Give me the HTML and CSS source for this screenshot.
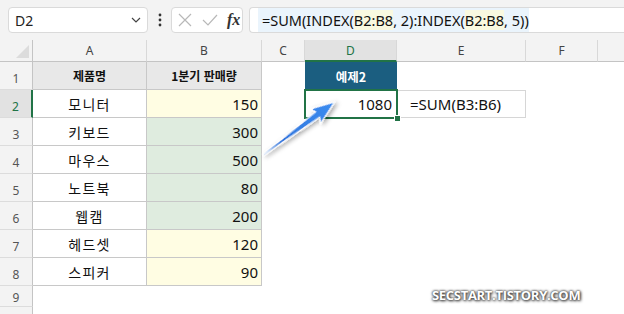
FILE: index.html
```html
<!DOCTYPE html>
<html lang="ko">
<head>
    <meta charset="utf-8">
    <title>INDEX 범위 합계</title>
    <link rel="stylesheet" href="styles.css">
</head>
<body>
<div class="app">

    <div class="bar">
        <div class="namebox">
            <span>D2</span>
            <svg class="chev" width="10" height="6" viewBox="0 0 10 6"><path d="M1 1 L5 5 L9 1" fill="none" stroke="#444" stroke-width="1.2"/></svg>
        </div>
        <div class="dots">
            <svg width="4" height="14" viewBox="0 0 4 14"><circle cx="2" cy="2" r="1.4" fill="#333"/><circle cx="2" cy="7" r="1.4" fill="#333"/><circle cx="2" cy="12" r="1.4" fill="#333"/></svg>
        </div>
        <div class="fxbox">
            <svg width="14" height="14" viewBox="0 0 14 14"><path d="M1 1 L13 13 M13 1 L1 13" stroke="#b8b8b8" stroke-width="1.2"/></svg>
            <svg width="16" height="14" viewBox="0 0 16 14"><path d="M1 7 L6 12 L15 2" fill="none" stroke="#b8b8b8" stroke-width="1.2"/></svg>
            <span class="fx">fx</span>
        </div>
        <div class="formula">
            <span class="ftext">=SUM(INDEX(<span class="hl">B2:B8</span>, 2):INDEX(<span class="hl">B2:B8</span>, 5))</span>
        </div>
    </div>

    <div class="sheet">
        <div class="row hdr">
            <div class="rh corner"><span class="tri"></span></div>
            <div class="ch col-a">A</div>
            <div class="ch col-b">B</div>
            <div class="ch col-c">C</div>
            <div class="ch col-d sel">D</div>
            <div class="ch col-e">E</div>
            <div class="ch col-f">F</div>
            <div class="ch col-g"></div>
        </div>

        <div class="row">
            <div class="rh">1</div>
            <div class="cell col-a th">제품명</div>
            <div class="cell col-b th">1분기 판매량</div>
            <div class="blank col-c"></div>
            <div class="blank col-d title">예제2</div>
        </div>
        <div class="row">
            <div class="rh sel">2</div>
            <div class="cell col-a name">모니터</div>
            <div class="cell col-b num yellow">150</div>
            <div class="blank col-c"></div>
            <div class="blank col-d active">1080<span class="handle"></span></div>
            <div class="blank col-e note">=SUM(B3:B6)</div>
        </div>
        <div class="row">
            <div class="rh">3</div>
            <div class="cell col-a name">키보드</div>
            <div class="cell col-b num green">300</div>
        </div>
        <div class="row">
            <div class="rh">4</div>
            <div class="cell col-a name">마우스</div>
            <div class="cell col-b num green">500</div>
        </div>
        <div class="row">
            <div class="rh">5</div>
            <div class="cell col-a name">노트북</div>
            <div class="cell col-b num green">80</div>
        </div>
        <div class="row">
            <div class="rh">6</div>
            <div class="cell col-a name">웹캠</div>
            <div class="cell col-b num green">200</div>
        </div>
        <div class="row">
            <div class="rh">7</div>
            <div class="cell col-a name">헤드셋</div>
            <div class="cell col-b num yellow">120</div>
        </div>
        <div class="row">
            <div class="rh">8</div>
            <div class="cell col-a name">스피커</div>
            <div class="cell col-b num yellow">90</div>
        </div>
        <div class="row short">
            <div class="rh">9</div>
        </div>
        <div class="row">
            <div class="rh"></div>
        </div>
    </div>

    <!-- arrow from B4 to D2 -->
    <svg class="arrow" width="624" height="314" viewBox="0 0 624 314">
        <defs>
            <linearGradient id="blue" x1="0" y1="0" x2="1" y2="0">
                <stop offset="0" stop-color="#2a6fd6"/>
                <stop offset="1" stop-color="#3b8cf0"/>
            </linearGradient>
            <filter id="shadow" x="-20%" y="-50%" width="140%" height="200%">
                <feDropShadow dx="1.5" dy="2.5" stdDeviation="2" flood-color="#000" flood-opacity="0.35"/>
            </filter>
        </defs>
        <g transform="translate(263 155) rotate(-36.5)">
            <path d="M0 -0.6 L68 -3.4 L65 -9 L89 0 L65 9 L68 3.4 L0 0.6 Z" fill="url(#blue)" stroke="#fff" stroke-width="1.3" stroke-linejoin="round" filter="url(#shadow)"/>
        </g>
    </svg>

    <div class="watermark">SECSTART.TISTORY.COM</div>
</div>
</body>
</html>
```

FILE: styles.css
```css
*{
    box-sizing: border-box;
    margin: 0;
    padding: 0;
}

body{
    background: #ffffff;
    font-family: "Noto Sans", "Noto Sans CJK KR", sans-serif;
    color: #222;
}

.app{
    position: relative;
    width: 624px;
    height: 314px;
    overflow: hidden;
    background: #ffffff;
}

/* ---- formula bar ---- */

.bar{
    height: 40px;
    background: #f3f3f3;
    display: flex;
    align-items: center;
    padding-left: 8px;
}

.namebox{
    width: 140px;
    height: 26px;
    background: #fff;
    border: 1px solid #dadada;
    border-radius: 4px;
    display: flex;
    align-items: center;
    justify-content: space-between;
    padding: 0 6px 0 6px;
    font-size: 14px;
    color: #222;
}

.dots{
    width: 23px;
    display: flex;
    justify-content: center;
}

.fxbox{
    width: 72px;
    height: 26px;
    background: #fff;
    border: 1px solid #dadada;
    border-radius: 4px;
    display: flex;
    align-items: center;
    gap: 10px;
    padding-left: 6px;
}

.fx{
    font-family: "Liberation Serif", serif;
    font-style: italic;
    font-weight: bold;
    font-size: 16px;
    color: #333;
    margin-left: -1px;
}

.formula{
    flex: 1;
    height: 26px;
    margin-left: 6px;
    background: #fff;
    border: 1px solid #dadada;
    border-right: 0;
    border-radius: 4px 0 0 4px;
    display: flex;
    align-items: center;
    padding-left: 8px;
    font-size: 14.5px;
    color: #111;
    white-space: nowrap;
}

.ftext{
    background: #eaf4fc;
    padding: 2px 0 2px 4px;
}

.hl{
    background: #f9f9e0;
}

/* ---- sheet ---- */

.sheet{
    font-family: "Noto Sans CJK KR", "Noto Sans", sans-serif;
}

.row{
    display: flex;
    height: 28px;
}

.row.hdr{
    height: 22px;
}

.row.short{
    height: 21px;
}

.rh{
    width: 33px;
    flex: none;
    background: #f3f3f3;
    border-right: 1px solid #c4c4c4;
    border-bottom: 1px solid #dcdcdc;
    font-family: "Noto Sans", sans-serif;
    font-size: 12px;
    color: #555;
    text-align: center;
    padding-top: 8px;
}

.row.short .rh{
    padding-top: 3px;
}

.rh.sel{
    background: #e2e2e2;
    color: #217346;
    border-right: 2px solid #217346;
}

.corner{
    position: relative;
    border-bottom: 1px solid #c4c4c4;
}

.tri{
    position: absolute;
    right: 3px;
    bottom: 3px;
    border-style: solid;
    border-width: 0 0 13px 13px;
    border-color: transparent transparent #dcdcdc transparent;
}

.ch{
    flex: none;
    background: #f3f3f3;
    border-right: 1px solid #d8d8d8;
    border-bottom: 1px solid #c4c4c4;
    font-family: "Noto Sans", sans-serif;
    font-size: 12px;
    color: #444;
    text-align: center;
    line-height: 21px;
}

.ch.sel{
    background: #e2e2e2;
    color: #217346;
    border-bottom: 2px solid #217346;
}

.col-a{ width: 114px; flex: none; }
.col-b{ width: 115px; flex: none; }
.col-c{ width: 43px; flex: none; }
.col-d{ width: 92px; flex: none; }
.col-e{ width: 129px; flex: none; }
.col-f{ width: 72px; flex: none; }
.col-g{ flex: 1; border-right: 0; }

.cell{
    border-right: 1px solid #c8c8c8;
    border-bottom: 1px solid #c8c8c8;
    font-size: 14px;
    display: flex;
    align-items: center;
    color: #111;
}

.th{
    background: #e8e8e8;
    justify-content: center;
    font-size: 12px;
    font-weight: bold;
}

.name{
    justify-content: center;
    letter-spacing: 1.3px;
}

.num{
    justify-content: flex-end;
    padding-right: 3px;
    font-family: "Noto Sans", sans-serif;
    font-size: 15px;
}

.yellow{ background: #fffde3; }
.green{ background: #dfecdf; }

.blank{
    display: flex;
    align-items: center;
}

.title{
    background: #1b5e80;
    color: #fff;
    font-size: 12.5px;
    font-weight: bold;
    justify-content: center;
}

.active{
    position: relative;
    justify-content: flex-end;
    padding-right: 5px;
    font-family: "Noto Sans", sans-serif;
    font-size: 15px;
    color: #111;
    outline: 2px solid #217346;
    outline-offset: -1px;
}

.handle{
    position: absolute;
    right: -4px;
    bottom: -4px;
    width: 7px;
    height: 7px;
    background: #217346;
    border: 1px solid #fff;
}

.note{
    border: 1px solid #d6d6d6;
    border-left: 0;
    padding-left: 13px;
    font-family: "Noto Sans", sans-serif;
    font-size: 15px;
    color: #111;
}

/* ---- overlays ---- */

.arrow{
    position: absolute;
    left: 0;
    top: 0;
    pointer-events: none;
}

.watermark{
    position: absolute;
    left: 432px;
    top: 286px;
    font-family: "Open Sans", sans-serif;
    font-weight: bold;
    font-size: 13px;
    letter-spacing: -0.3px;
    color: #ffffff;
    text-shadow: 0 0 2px #444, 0 0 3px #555, 1px 1px 3px #333;
}
```
